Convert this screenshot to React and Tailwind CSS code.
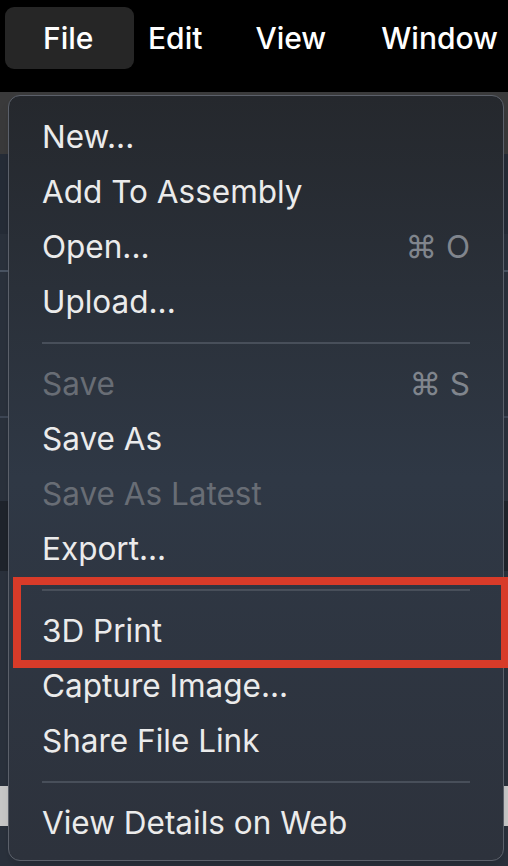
const items = [
  { label: 'New...' },
  { label: 'Add To Assembly' },
  { label: 'Open...', shortcut: '⌘ O' },
  { label: 'Upload...' },
  { sep: true },
  { label: 'Save', shortcut: '⌘ S', disabled: true },
  { label: 'Save As' },
  { label: 'Save As Latest', disabled: true },
  { label: 'Export...' },
  { sep: true },
  { label: '3D Print', marked: true },
  { label: 'Capture Image...' },
  { label: 'Share File Link' },
  { sep: true },
  { label: 'View Details on Web' },
]

function MenuRow({ item }) {
  if (item.sep) {
    return (
      <div className="flex h-[27px] items-center px-[33px]">
        <div className="h-[2px] w-full bg-[#484f5a]" />
      </div>
    )
  }
  return (
    <div className="relative flex h-[55px] items-center justify-between pl-[33px] pr-[33px]">
      <span className={item.disabled ? 'text-[#686d75]' : 'text-[#ebebeb]'}>{item.label}</span>
      {item.shortcut && <span className="text-[#80858d]">{item.shortcut}</span>}
      {item.marked && (
        <div className="pointer-events-none absolute left-[4px] right-[-6px] top-[-26px] bottom-[-10px] border-[8px] border-[#d83b29]" />
      )}
    </div>
  )
}

export default function App() {
  return (
    <div
      className="relative flex h-[866px] w-[508px] flex-col overflow-hidden bg-[#2a313c]"
      style={{ fontFamily: 'Inter, "Noto Sans", sans-serif' }}
    >
      {/* menu bar */}
      <div className="flex h-[92px] shrink-0 items-start bg-black pt-[7px] text-[30px] font-medium text-white">
        <div className="ml-[5px] flex h-[62px] w-[129px] items-center rounded-[9px] bg-[#262626] pl-[38px]">File</div>
        <div className="flex h-[62px] items-center pl-[14px]">Edit</div>
        <div className="flex h-[62px] items-center pl-[53px]">View</div>
        <div className="flex h-[62px] items-center pl-[55px]">Window</div>
      </div>

      {/* background app peeking out */}
      <div className="h-[62px] shrink-0 bg-[#3a3a3b]" />
      <div className="h-[80px] shrink-0 bg-[#252c37]" />
      <div className="h-[38px] shrink-0 border-b-2 border-[#4a5463]" />
      <div className="h-[146px] shrink-0 border-b-2 border-[#3e4756]" />
      <div className="h-[83px] shrink-0" />
      <div className="h-[70px] shrink-0 bg-[#1f242c]" />
      <div className="h-[215px] shrink-0" />
      <div className="h-[40px] shrink-0 bg-[#c8c8c8]" />

      {/* dropdown */}
      <div className="absolute left-[8px] top-[95px] w-[496px] rounded-[12px] border-[1.5px] border-[#5b606a] bg-linear-to-b from-[#25282d] via-[#2f3845] to-[#2d323c] pb-[10px] pt-[13px] text-[31.5px] shadow-lg">
        {items.map((item, i) => (
          <MenuRow key={i} item={item} />
        ))}
      </div>
    </div>
  )
}
